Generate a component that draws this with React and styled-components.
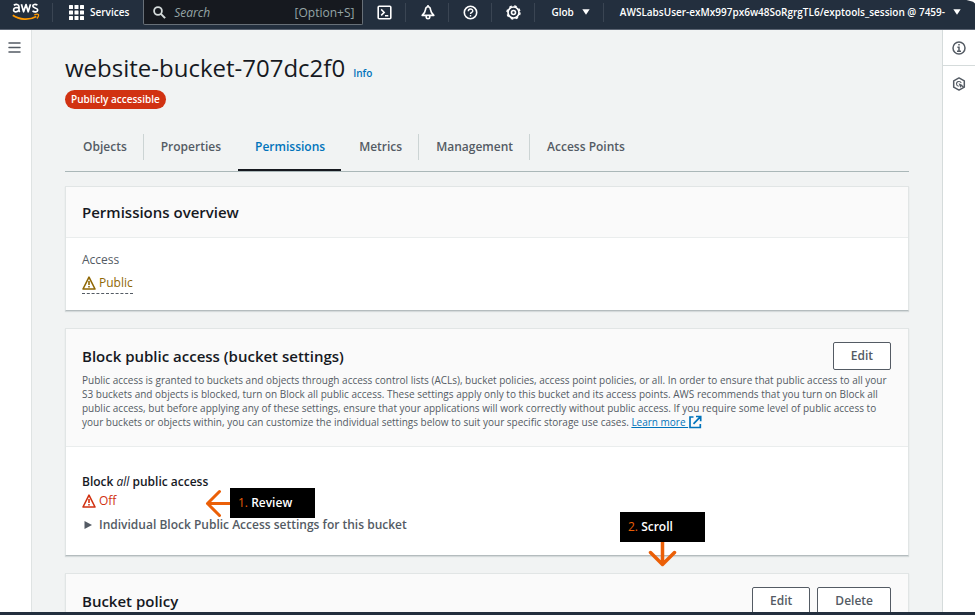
import React from "react";
import styled, { createGlobalStyle, css } from "styled-components";

const GlobalStyle = createGlobalStyle`
  *, *::before, *::after { box-sizing: border-box; }
  body { margin: 0; background: #f1f3f3; overflow: hidden; }
  body, button, input { font-family: "Open Sans", "Noto Sans", sans-serif; }
  button { cursor: pointer; }
  h1, h2, h3, p { margin: 0; }
  svg { display: block; flex: none; }
`;

const Page = styled.div`
  height: 100vh;
  display: flex;
  flex-direction: column;
  border-bottom: 3px solid #232f3e;
  color: #16191f;
  font-size: 12px;
`;

/* ---------- top bar ---------- */

const TopBar = styled.header`
  display: flex;
  flex: none;
  align-items: flex-start;
  position: relative;
  height: 30px;
  background: #232f3e;
  border-bottom: 1px solid #5b6472;
  color: #fff;
`;

const Cell = styled.div`
  display: flex;
  align-items: center;
  height: 24px;
`;

const LogoLink = styled.a`
  display: flex;
  padding: 0 13px 0 12px;
`;

const BarButton = styled.button`
  display: flex;
  align-items: center;
  justify-content: ${(p) => (p.$icon ? "center" : "flex-start")};
  gap: ${(p) => p.$gap || 8}px;
  flex: none;
  width: ${(p) => (p.$icon ? "43px" : "auto")};
  height: 24px;
  padding: ${(p) => (p.$icon ? "0" : "0 14px 0 16px")};
  border: 0;
  background: none;
  color: #fff;
  font-size: 10px;
  line-height: 24px;
  font-weight: 600;
  white-space: nowrap;
`;

const Divider = styled.span`
  flex: none;
  width: 1px;
  height: 19px;
  margin-left: -1px;
  background: #3a4553;
`;

const SearchBox = styled.label`
  display: flex;
  flex: 1;
  align-items: center;
  min-width: 0;
  height: 25px;
  padding: 0 8px 0 9px;
  gap: 8px;
  background: #16191f;
  border: 1px solid #687078;
  border-top: 0;
  border-radius: 0 0 2px 2px;
  color: #95a5a6;
  font-size: 12px;
`;

const SearchInput = styled.input`
  flex: 1;
  min-width: 0;
  width: 0;
  padding: 0;
  border: 0;
  outline: 0;
  background: none;
  color: #fff;
  font-size: 12px;
  &::placeholder { color: #95a5a6; font-style: italic; opacity: 1; }
`;

const CursorTip = styled.div`
  position: absolute;
  top: 0;
  right: 0;
`;

/* ---------- shell ---------- */

const Shell = styled.div`
  display: flex;
  flex: 1;
  min-height: 0;
`;

const LeftRail = styled.aside`
  flex: none;
  width: 32px;
  padding: 12px 10px 12px 7px;
  background: #fff;
  border-right: 1px solid #dfe3e3;
`;

const RightRail = styled.aside`
  flex: none;
  width: 33px;
  background: #fff;
  border-left: 1px solid #d5dbdb;
`;

const RailButton = styled.button`
  display: flex;
  align-items: center;
  justify-content: center;
  width: 100%;
  height: ${(p) => p.$height || 35}px;
  padding: 0;
  border: 0;
  border-bottom: ${(p) => (p.$line ? "1px solid #d5dbdb" : "0")};
  background: none;
  color: #545b64;
`;

const Main = styled.main`
  flex: 1;
  min-width: 0;
  overflow: hidden;
  padding: 21px 33px 0;
  background: #f1f3f3;
`;

const TitleRow = styled.div`
  display: flex;
  align-items: baseline;
  gap: 8px;
`;

const Title = styled.h1`
  font-size: 24px;
  line-height: 34px;
  font-weight: 400;
`;

const InfoLink = styled.a`
  color: #0073bb;
  font-size: 10px;
  font-weight: 600;
  text-decoration: none;
`;

const Badge = styled.span`
  display: inline-block;
  margin-top: 5px;
  padding: 0 6px;
  border-radius: 10px;
  background: #d13212;
  color: #fff;
  font-size: 10px;
  line-height: 19px;
  font-weight: 600;
  vertical-align: top;
`;

const Tabs = styled.div`
  display: flex;
  margin: 25px 0 14px;
  border-bottom: 1px solid #aab7b8;
`;

const Tab = styled.button`
  position: relative;
  height: 37px;
  padding: 0 16px 11px 18px;
  border: 0;
  background: none;
  color: ${(p) => (p.$active ? "#0073bb" : "#545b64")};
  font-size: 12px;
  line-height: 26px;
  font-weight: 600;
  white-space: nowrap;

  & + &::before {
    content: "";
    position: absolute;
    left: 0;
    top: 0;
    width: 1px;
    height: 26px;
    background: #ccd4d4;
  }

  ${(p) =>
    p.$active &&
    css`
      &::after {
        content: "";
        position: absolute;
        left: 1px;
        right: 0;
        bottom: 0;
        height: 2px;
        background: #16191f;
      }
    `}
`;

/* ---------- cards ---------- */

const Card = styled.section`
  position: relative;
  margin-bottom: 17px;
  background: #fff;
  border: 1px solid #e1e5e5;
  border-bottom-color: #b4bcbe;
  box-shadow: 0 1px 1px #d5dadb;
`;

const CardHeader = styled.div`
  padding: 13px 17px ${(p) => p.$bottom || 13}px 16px;
  background: #fafafa;
  border-bottom: 1px solid #eaeded;
`;

const HeadingRow = styled.div`
  display: flex;
  align-items: center;
  justify-content: space-between;
`;

const Heading = styled.h2`
  font-size: 15px;
  line-height: 24px;
  font-weight: 600;
`;

const Actions = styled.div`
  display: flex;
  gap: 7px;
`;

const Button = styled.button`
  height: 28px;
  padding: 0 17px;
  border: 1px solid #545b64;
  border-radius: 2px;
  background: #fff;
  color: #545b64;
  font-size: 12px;
  line-height: 26px;
  font-weight: 600;
`;

const Description = styled.p`
  margin-top: 3px;
  color: #545b64;
  font-size: 10px;
  line-height: 14px;
`;

const LearnMore = styled.a`
  color: #0073bb;
  text-decoration: underline;
  white-space: nowrap;
  svg { display: inline-block; vertical-align: top; }
`;

const CardBody = styled.div`
  padding: ${(p) => p.$padding};
`;

const Label = styled.div`
  color: #545b64;
  font-size: 12px;
  line-height: 18px;
`;

const SettingName = styled.h3`
  font-size: 12px;
  line-height: 18px;
  font-weight: 600;
  em { font-weight: 400; }
`;

const Status = styled.div`
  display: flex;
  align-items: center;
  gap: 3px;
  width: fit-content;
  color: ${(p) => p.$color};
  font-size: 12px;
  line-height: 20px;
  ${(p) =>
    p.$dashed &&
    css`
      margin-top: 4px;
      border-bottom: 1px dashed #545b64;
    `}
`;

const Expander = styled.button`
  display: flex;
  align-items: center;
  gap: 7px;
  margin-top: 4px;
  padding: 0 0 0 2px;
  border: 0;
  background: none;
  color: #545b64;
  font-size: 12px;
  line-height: 20px;
  font-weight: 600;
`;

/* ---------- guide callouts ---------- */

const Callout = styled.div`
  position: absolute;
  display: flex;
  flex-direction: ${(p) => (p.$down ? "column" : "row")};
  align-items: center;
  left: ${(p) => p.$left}px;
  top: ${(p) => p.$top}px;
  z-index: 1;
`;

const CalloutBox = styled.div`
  width: 85px;
  padding-left: 8px;
  background: #000;
  color: #fff;
  font-size: 12px;
  line-height: 30px;
  font-weight: 600;
  white-space: nowrap;
  span { color: #eb5f07; font-weight: 400; }
`;

/* ---------- drawings ---------- */

const AwsLogo = () => (
  <svg width="28" height="24" viewBox="0 0 28 24" fill="none" role="img" aria-label="aws">
    <g stroke="#fff" strokeWidth="1.7" strokeLinejoin="round">
      <path d="M1.8 5.2C3.8 4 7 3.9 7 6.8v3.2c0 .9.2 1.4.7 2" />
      <path d="M7 7.8C4.5 7.3 1.6 7.600 1.600 9.900c0 2.700 4.200 2.400 5.400 0" />
      <path d="M9.400 4.200l2.200 7.600 2.400-7.200 2.200 7.200 2.300-7.600" />
      <path d="M25.400 5C23.300 4 20.800 4.300 20.800 6.100c0 2.300 4.900 1.400 4.900 3.900 0 2.200-3.200 2.300-5.200 1.100" />
    </g>
    <path d="M.8 15.200c6.500 4.600 16.400 5.300 23.500 1.300" stroke="#ff9900" strokeWidth="1.800" />
    <path d="M22.300 14.900c1.500-.7 3.800-.7 4.200-.3s-.4 2.900-1.600 4" stroke="#ff9900" strokeWidth="1.300" />
  </svg>
);

const GridIcon = () => (
  <svg width="15" height="15" fill="currentColor" aria-hidden="true">
    {[0, 5.5, 11].map((y) =>
      [0, 5.5, 11].map((x) => <rect key={`${x}-${y}`} x={x} y={y} width="4" height="4" rx=".5" />)
    )}
  </svg>
);

const SearchIcon = () => (
  <svg width="13" height="13" viewBox="0 0 13 13" fill="none" stroke="#d5dbdb" strokeWidth="1.800" aria-hidden="true">
    <circle cx="5" cy="5" r="3.900" />
    <path d="M7.900 7.900l4.200 4.200" strokeWidth="2" />
  </svg>
);

const TerminalIcon = () => (
  <svg width="15" height="15" viewBox="0 0 15 15" fill="none" stroke="currentColor" strokeWidth="1.600" aria-hidden="true">
    <rect x="1.200" y="1.200" width="12.600" height="12.600" rx="1" />
    <path d="M4.200 4.400l3 3-3 3M8 10.700h3.300" strokeWidth="1.500" />
  </svg>
);

const BellIcon = () => (
  <svg width="14" height="15" viewBox="0 0 14 15" fill="none" stroke="currentColor" strokeWidth="1.600" strokeLinejoin="round" aria-hidden="true">
    <path d="M7 1.800C5.300 1.800 4.600 3 4.500 4.600 4.300 7 3.200 8.300 1.200 10.400h11.600C10.800 8.300 9.700 7 9.500 4.600 9.400 3 8.700 1.800 7 1.800z" />
    <path d="M5.200 10.600v1.600c0 .8.700 1.400 1.800 1.400s1.800-.6 1.800-1.400v-1.600M7 0v1.800" />
  </svg>
);

const HelpIcon = () => (
  <svg width="15" height="15" viewBox="0 0 15 15" fill="none" stroke="currentColor" strokeWidth="1.600" aria-hidden="true">
    <circle cx="7.500" cy="7.500" r="6.200" />
    <path d="M5.300 6.200c0-3 4.500-2.900 4.500-.3 0 1.600-2.300 1.500-2.300 3.200M7.500 10v1.500" strokeWidth="1.400" />
  </svg>
);

const GearIcon = () => (
  <svg width="15" height="15" viewBox="0 0 15 15" fill="none" stroke="currentColor" aria-hidden="true">
    <circle cx="7.500" cy="7.500" r="5.500" strokeWidth="1.700" />
    <circle cx="7.500" cy="7.500" r="6.500" strokeWidth="1.400" strokeDasharray="2.550 2.550" />
    <circle cx="7.500" cy="7.500" r="2" strokeWidth="1.600" />
  </svg>
);

const Caret = () => (
  <svg width="8" height="6" viewBox="0 0 8 6" fill="currentColor" aria-hidden="true">
    <path d="M.3.300h7.400L4 5.800z" />
  </svg>
);

const MenuIcon = () => (
  <svg width="13" height="11" viewBox="0 0 13 11" stroke="currentColor" strokeWidth="1.500" strokeLinecap="round" aria-hidden="true">
    <path d="M1 1h11M1 5.500h11M1 10h11" />
  </svg>
);

const InfoIcon = () => (
  <svg width="14" height="14" viewBox="0 0 14 14" fill="none" stroke="currentColor" strokeWidth="1.500" aria-hidden="true">
    <circle cx="7" cy="7" r="6" />
    <path d="M7 3v1.600M5.400 6.200H7v4M5 10.300h4" />
  </svg>
);

const HexIcon = () => (
  <svg width="14" height="14" viewBox="0 0 14 14" fill="none" stroke="currentColor" strokeWidth="1.500" strokeLinejoin="round" aria-hidden="true">
    <path d="M7 .9l5.300 2.900v6.400L7 13.100 1.700 10.200V3.800z" />
    <path d="M6.800 9.300A2.400 2.400 0 1 1 9.200 6.200" strokeWidth="1.100" />
    <path d="M6.600 6.200l4.600 2-2 .9-.8 1.900z" fill="currentColor" stroke="none" />
    <path d="M8.500 8.300l3.300 1.900" strokeWidth="1.200" />
  </svg>
);

const WarningIcon = () => (
  <svg width="14" height="14" viewBox="0 0 14 14" fill="none" stroke="currentColor" strokeWidth="1.600" strokeLinejoin="round" aria-hidden="true">
    <path d="M7 1.200l6 11.800H1z" />
    <path d="M7 5v4M7 10v1.500" />
  </svg>
);

const ExternalIcon = () => (
  <svg width="14" height="14" viewBox="0 0 14 14" fill="none" stroke="currentColor" strokeWidth="1.700" aria-hidden="true">
    <path d="M5.500 2H2v10.500h10.300V9M8 1.500h4.700v4.700M12.500 1.700L5.500 8.800" />
  </svg>
);

const PlayIcon = () => (
  <svg width="8" height="8" viewBox="0 0 8 8" fill="currentColor" aria-hidden="true">
    <path d="M.5 0L8 4 .5 8z" />
  </svg>
);

const ArrowLeft = () => (
  <svg width="25" height="29" viewBox="0 0 25 29" fill="none" stroke="#eb5f07" strokeWidth="3" aria-hidden="true">
    <path d="M25 14.500H2.500M14.500 2.500L2.500 14.500l12 12" strokeLinecap="round" strokeLinejoin="round" />
  </svg>
);

const ArrowDown = () => (
  <svg width="29" height="26" viewBox="0 0 29 26" fill="none" stroke="#eb5f07" strokeWidth="3.500" aria-hidden="true">
    <path d="M14.500 0v22M2.500 10.500l12 12 12-12" strokeLinecap="round" strokeLinejoin="round" />
  </svg>
);

const CursorIcon = () => (
  <svg width="9" height="4" viewBox="0 0 9 4" aria-hidden="true">
    <path d="M.5 0H9v3.500L7 1.800z" fill="#fff" />
  </svg>
);

const TAB_NAMES = ["Objects", "Properties", "Permissions", "Metrics", "Management", "Access Points"];

const TOOLS = [
  ["CloudShell", TerminalIcon],
  ["Notifications", BellIcon],
  ["Help", HelpIcon],
  ["Settings", GearIcon],
];

export default function App() {
  return (
    <Page>
      <GlobalStyle />
      <TopBar>
        <Cell>
          <LogoLink href="#"><AwsLogo /></LogoLink>
          <Divider />
          <BarButton $gap={6}><GridIcon />Services</BarButton>
        </Cell>
        <SearchBox>
          <SearchIcon />
          <SearchInput type="text" placeholder="Search" aria-label="Search" />
          <span>[Option+S]</span>
        </SearchBox>
        {TOOLS.map(([name, Icon]) => (
          <Cell key={name}>
            <BarButton $icon aria-label={name}><Icon /></BarButton>
            <Divider />
          </Cell>
        ))}
        <Cell>
          <BarButton>Glob<Caret /></BarButton>
          <Divider />
          <BarButton>AWSLabsUser-exMx997px6w48SoRgrgTL6/exptools_session @ 7459-<Caret /></BarButton>
        </Cell>
        <CursorTip><CursorIcon /></CursorTip>
      </TopBar>

      <Shell>
        <LeftRail>
          <RailButton $height={11} aria-label="Open navigation"><MenuIcon /></RailButton>
        </LeftRail>

        <Main>
          <TitleRow>
            <Title>website-bucket-707dc2f0</Title>
            <InfoLink href="#">Info</InfoLink>
          </TitleRow>
          <Badge>Publicly accessible</Badge>

          <Tabs role="tablist">
            {TAB_NAMES.map((name) => (
              <Tab key={name} role="tab" aria-selected={name === "Permissions"} $active={name === "Permissions"}>
                {name}
              </Tab>
            ))}
          </Tabs>

          <Card>
            <CardHeader>
              <HeadingRow><Heading>Permissions overview</Heading></HeadingRow>
            </CardHeader>
            <CardBody $padding="13px 16px 16px">
              <Label>Access</Label>
              <Status $color="#906806" $dashed><WarningIcon />Public</Status>
            </CardBody>
          </Card>

          <Card>
            <CardHeader $bottom={17}>
              <HeadingRow>
                <Heading>Block public access (bucket settings)</Heading>
                <Button>Edit</Button>
              </HeadingRow>
              <Description>
                Public access is granted to buckets and objects through access control lists (ACLs), bucket policies,
                access point policies, or all. In order to ensure that public access to all your S3 buckets and objects
                is blocked, turn on Block all public access. These settings apply only to this bucket and its access
                points. AWS recommends that you turn on Block all public access, but before applying any of these
                settings, ensure that your applications will work correctly without public access. If you require some
                level of public access to your buckets or objects within, you can customize the individual settings
                below to suit your specific storage use cases.{" "}
                <LearnMore href="#">Learn more <ExternalIcon /></LearnMore>
              </Description>
            </CardHeader>
            <CardBody $padding="26px 16px 20px">
              <SettingName>Block <em>all</em> public access</SettingName>
              <Status $color="#d13212"><WarningIcon />Off</Status>
              <Expander aria-expanded="false">
                <PlayIcon />Individual Block Public Access settings for this bucket
              </Expander>
            </CardBody>
            <Callout $left={139} $top={159}>
              <ArrowLeft />
              <CalloutBox><span>1.</span> Review</CalloutBox>
            </Callout>
            <Callout $down $left={554} $top={183}>
              <CalloutBox><span>2.</span> Scroll</CalloutBox>
              <ArrowDown />
            </Callout>
          </Card>

          <Card>
            <CardHeader>
              <HeadingRow>
                <Heading>Bucket policy</Heading>
                <Actions>
                  <Button>Edit</Button>
                  <Button>Delete</Button>
                </Actions>
              </HeadingRow>
            </CardHeader>
          </Card>
        </Main>

        <RightRail>
          <RailButton $height={36} $line aria-label="Info"><InfoIcon /></RailButton>
          <RailButton aria-label="Resources"><HexIcon /></RailButton>
        </RightRail>
      </Shell>
    </Page>
  );
}
